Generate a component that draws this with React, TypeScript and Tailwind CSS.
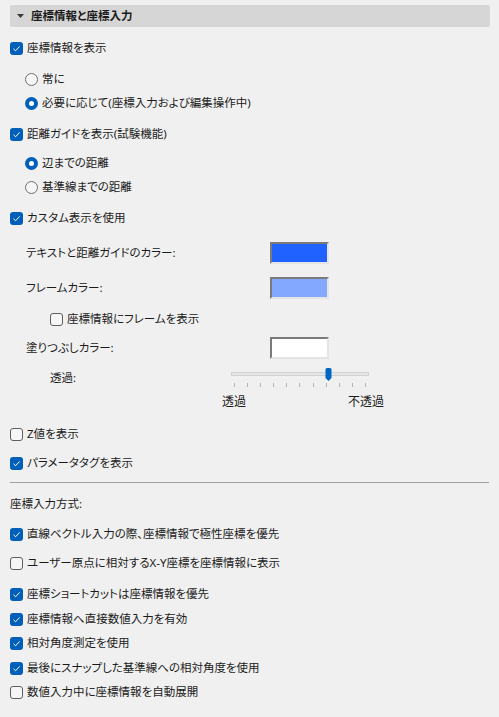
import React from "react";

const FONT = {
  fontFamily: '"Noto Sans", "Noto Sans CJK JP", sans-serif',
  fontFeatureSettings: '"palt"',
};

const CheckBox = ({ checked }: { checked: boolean }) =>
  checked ? (
    <div className="w-[13px] h-[13px] rounded-[3px] bg-[#005fb8] flex items-center justify-center shrink-0">
      <svg width="9" height="9" viewBox="0 0 9 9">
        <path d="M1.5 4.8 L3.6 6.8 L7.6 2.4" fill="none" stroke="#ffffff" strokeWidth="1" />
      </svg>
    </div>
  ) : (
    <div className="w-[13px] h-[13px] rounded-[3px] border border-[#5e5e5e] bg-[#f6f6f6] shrink-0"></div>
  );

const Radio = ({ checked }: { checked: boolean }) =>
  checked ? (
    <div className="w-[13px] h-[13px] rounded-full bg-[#005fb8] flex items-center justify-center shrink-0">
      <div className="w-[5px] h-[5px] rounded-full bg-white"></div>
    </div>
  ) : (
    <div className="w-[13px] h-[13px] rounded-full border border-[#6e6e6e] bg-[#f6f6f6] shrink-0"></div>
  );

const CheckRow = ({ checked, label, className = "" }: { checked: boolean; label: string; className?: string }) => (
  <div className={`h-[24px] flex items-center gap-[4px] ${className}`}>
    <CheckBox checked={checked} />
    <span>{label}</span>
  </div>
);

const RadioRow = ({ checked, label, className = "" }: { checked: boolean; label: string; className?: string }) => (
  <div className={`h-[24px] flex items-center gap-[4px] pl-[15px] ${className}`}>
    <Radio checked={checked} />
    <span>{label}</span>
  </div>
);

const Swatch = ({ color }: { color: string }) => (
  <div
    className={`w-[59px] h-[22px] border-2 border-t-[#7a7a7a] border-l-[#7a7a7a] border-b-[#e4e4e4] border-r-[#e4e4e4] ${color}`}
  ></div>
);

const ColorRow = ({ label, color, className = "" }: { label: string; color: string; className?: string }) => (
  <div className={`h-[24px] flex items-center pl-[16px] ${className}`}>
    <span className="w-[244px]">{label}</span>
    <Swatch color={color} />
  </div>
);

const ticks = Array.from({ length: 11 }, (_, i) => i);

export default function App() {
  return (
    <div className="w-[499px] h-[717px] bg-[#f0f0f0] text-[#1b1b1b] text-[11.5px] overflow-hidden" style={FONT}>
      <div className="pt-[5px] px-[10px]">
        <div className="h-[22px] w-[480px] bg-[#d6d6d6] rounded-[2px] flex items-center pl-[7px] gap-[7px] font-bold">
          <svg width="7" height="4" viewBox="0 0 7 4">
            <path d="M0 0 L7 0 L3.5 4 Z" fill="#3a3a3a" />
          </svg>
          <span>座標情報と座標入力</span>
        </div>

        <CheckRow checked label="座標情報を表示" className="mt-[9px]" />
        <RadioRow checked={false} label="常に" className="mt-[7px]" />
        <RadioRow checked label="必要に応じて(座標入力および編集操作中)" />
        <CheckRow checked label="距離ガイドを表示(試験機能)" className="mt-[7px]" />
        <RadioRow checked label="辺までの距離" className="mt-[5px]" />
        <RadioRow checked={false} label="基準線までの距離" />
        <CheckRow checked label="カスタム表示を使用" className="mt-[7px]" />

        <ColorRow label="テキストと距離ガイドのカラー:" color="bg-[#1f62ff]" className="mt-[11px]" />
        <ColorRow label="フレームカラー:" color="bg-[#82a9ff]" className="mt-[11px]" />
        <CheckRow checked={false} label="座標情報にフレームを表示" className="mt-[7px] pl-[40px]" />
        <ColorRow label="塗りつぶしカラー:" color="bg-white" className="mt-[5px]" />

        <div className="mt-[6px] h-[24px] flex items-center pl-[40px]">
          <span className="w-[181px]">透過:</span>
          <div className="relative w-[138px] h-[24px]">
            <div className="absolute left-0 right-0 top-[6px] h-[4px] bg-[#e6e6e6] border border-[#d2d2d2]"></div>
            <div className="absolute left-[94px] top-[2px] w-[7px] h-[13px]">
              <svg width="7" height="13" viewBox="0 0 7 13">
                <path d="M0.5 1.5 Q0.5 0 2 0 L5 0 Q6.5 0 6.5 1.5 L6.5 10 L3.5 13 L0.5 10 Z" fill="#0067c0" />
              </svg>
            </div>
            <div className="absolute left-[3px] top-[17px] w-[132px] flex justify-between">
              {ticks.map((t) => (
                <div key={t} className="w-px h-[4px] bg-[#b5b5b5]"></div>
              ))}
            </div>
          </div>
        </div>
        <div className="h-[24px] flex items-center pl-[212px] text-[12px]">
          <div className="w-[162px] flex justify-between">
            <span>透過</span>
            <span>不透過</span>
          </div>
        </div>

        <CheckRow checked={false} label="Z値を表示" className="mt-[8px]" />
        <CheckRow checked label="パラメータタグを表示" className="mt-[5px]" />

        <div className="mt-[7px] h-px w-[479px] bg-[#a0a0a0]"></div>

        <div className="mt-[9px] h-[24px] flex items-center">座標入力方式:</div>
        <CheckRow checked label="直線ベクトル入力の際、座標情報で極性座標を優先" className="mt-[6px]" />
        <CheckRow checked={false} label="ユーザー原点に相対するX-Y座標を座標情報に表示" className="mt-[5px]" />
        <CheckRow checked label="座標ショートカットは座標情報を優先" className="mt-[7px]" />
        <CheckRow checked label="座標情報へ直接数値入力を有効" className="mt-[1px]" />
        <CheckRow checked label="相対角度測定を使用" />
        <CheckRow checked label="最後にスナップした基準線への相対角度を使用" className="mt-[1px]" />
        <CheckRow checked={false} label="数値入力中に座標情報を自動展開" />
      </div>
    </div>
  );
}
